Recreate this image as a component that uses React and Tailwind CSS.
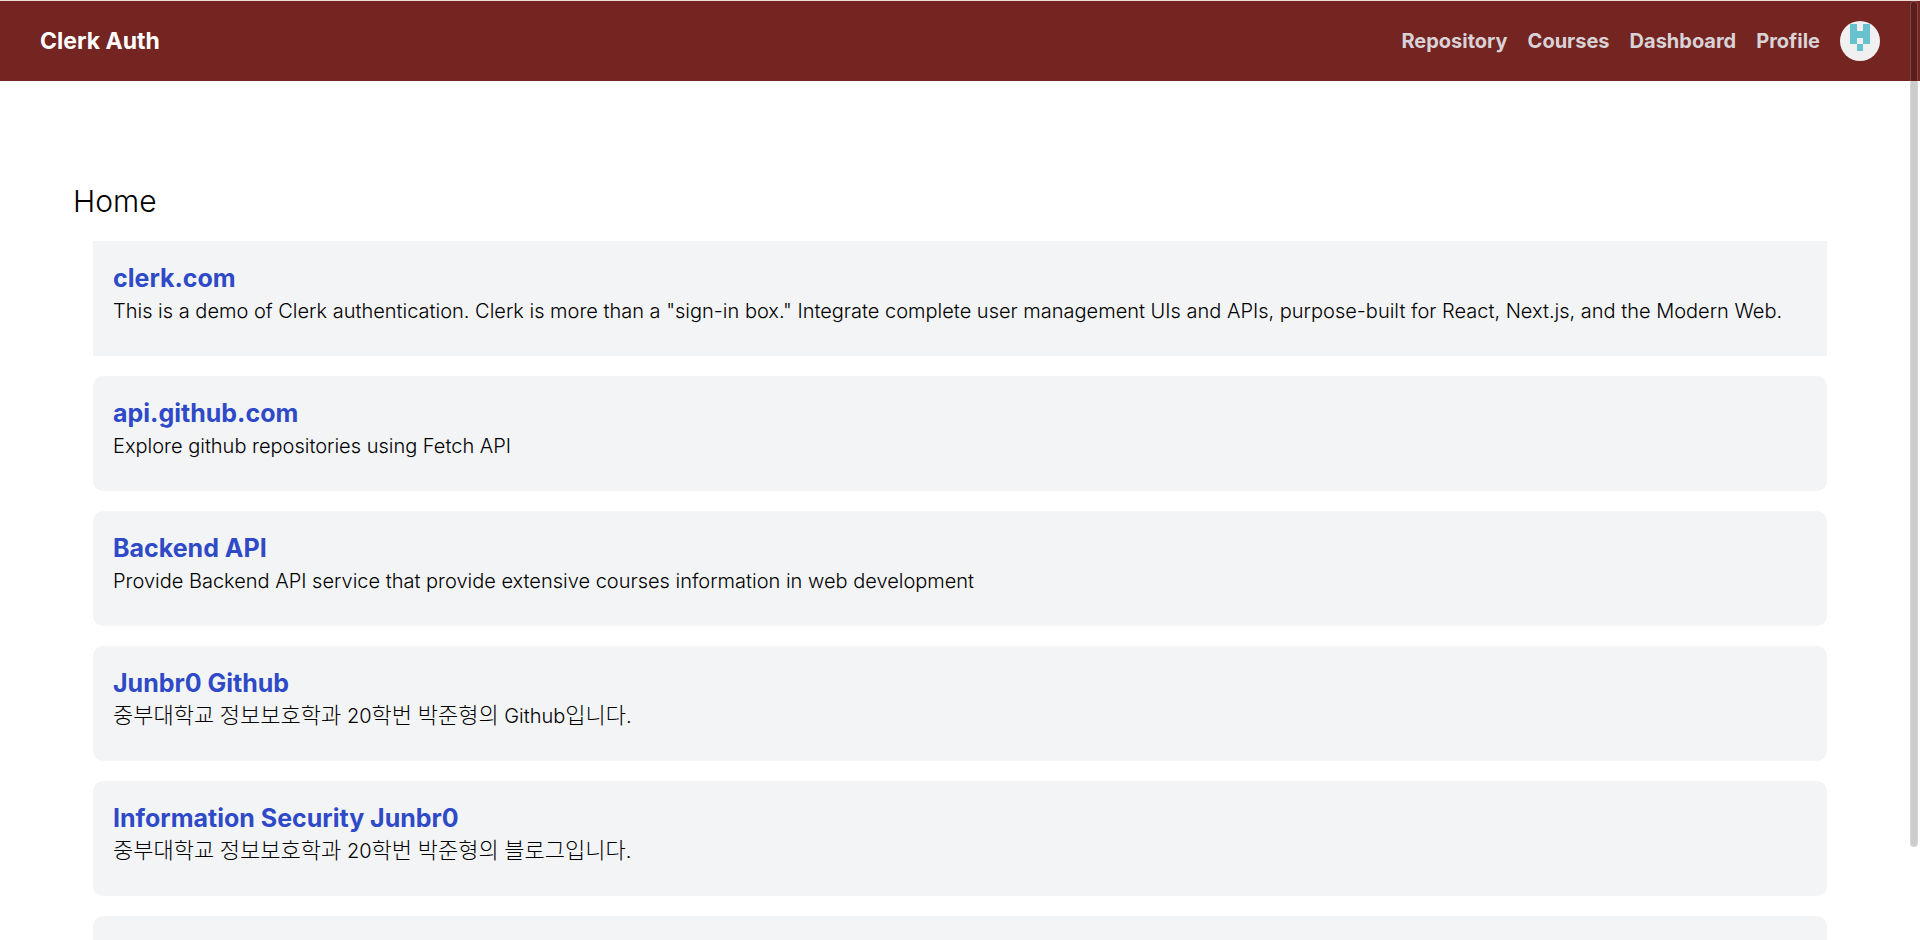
import React from "react";

const navLinks = ["Repository", "Courses", "Dashboard", "Profile"];

const cards = [
  {
    title: "clerk.com",
    text: 'This is a demo of Clerk authentication. Clerk is more than a "sign-in box." Integrate complete user management UIs and APIs, purpose-built for React, Next.js, and the Modern Web.',
    shape: "",
  },
  { title: "api.github.com", text: "Explore github repositories using Fetch API", shape: "rounded-[10px]" },
  {
    title: "Backend API",
    text: "Provide Backend API service that provide extensive courses information in web development",
    shape: "rounded-[10px]",
  },
  { title: "Junbr0 Github", text: "중부대학교 정보보호학과 20학번 박준형의 Github입니다.", shape: "rounded-[10px]" },
  { title: "Information Security Junbr0", text: "중부대학교 정보보호학과 20학번 박준형의 블로그입니다.", shape: "rounded-[10px]" },
];

// Hangul is set slightly larger so that it balances with the Latin text.
function MixedText({ children }) {
  return children.split(/([\uac00-\ud7a3]+)/).map((part, i) =>
    i % 2 ? (
      <span key={i} className="text-[22px] leading-5">
        {part}
      </span>
    ) : (
      part
    )
  );
}

function Avatar() {
  return (
    <button type="button" aria-label="Account" className="size-10 overflow-hidden rounded-full">
      <svg viewBox="0 0 40 40" className="size-10" aria-hidden="true">
        <rect width="40" height="40" fill="#f0f0f0" />
        <path
          d="M10 3h7v7h6V3h7v20h-7v7h-6v-7h-7zM17 17v6h6v-6z"
          fill="#68c1cf"
          fillRule="evenodd"
        />
      </svg>
    </button>
  );
}

export default function App() {
  return (
    <div className="h-screen overflow-y-auto bg-white font-['Inter','Noto_Sans_CJK_KR',sans-serif] text-black [scrollbar-width:none]">
      <header className="flex h-[81px] items-center justify-between border-t border-[#f0d9d0] bg-[#742522] px-10">
        <a href="#home" className="text-[23px] font-bold text-white">
          Clerk Auth
        </a>
        <nav className="flex items-center gap-5 text-[20px] font-bold text-[#d9d2d6]">
          {navLinks.map((label) => (
            <a key={label} href={"#" + label.toLowerCase()}>
              {label}
            </a>
          ))}
          <Avatar />
        </nav>
      </header>

      <main className="px-[73px] pt-[100px]">
        <h1 className="text-[30px] leading-10 font-light">Home</h1>
        <div className="mx-5 mt-5 flex flex-col gap-5">
          {cards.map((card) => (
            <article key={card.title} className={"bg-gray-100 px-5 pt-5 pb-[30px] " + card.shape}>
              <h2 className="text-[25px] leading-[35px] font-bold text-[#2f4ac7]">
                <a href="#details">{card.title}</a>
              </h2>
              <p className="text-[20px] leading-[30px] font-light">
                <MixedText>{card.text}</MixedText>
              </p>
            </article>
          ))}
          <article className="min-h-[115px] rounded-[10px] bg-gray-100" />
        </div>
      </main>

      <div
        aria-hidden="true"
        className="fixed top-px right-[2px] h-[90%] w-2 rounded-full border border-white/20 bg-black/20"
      />
    </div>
  );
}
